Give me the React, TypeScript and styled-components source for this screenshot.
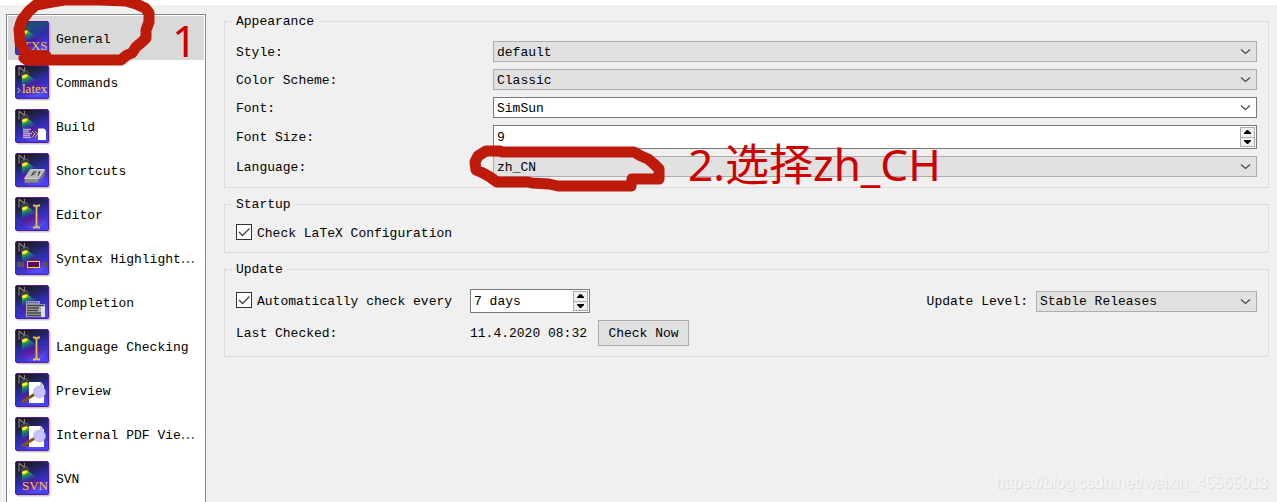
import React from 'react';
import styled, { createGlobalStyle } from 'styled-components';

const mono = `"Liberation Mono", "Noto Sans CJK SC", monospace`;

const GlobalStyle = createGlobalStyle`
  *, *::before, *::after { box-sizing: border-box; }
  body {
    margin: 0;
    background: #f0f0f0;
    color: #000;
    font: 13px/16px ${mono};
  }
  input, select, button { font: inherit; color: inherit; margin: 0; }
`;

const Window = styled.div`
  position: relative;
  display: flex;
  height: 100vh;
  padding: 5px 8px 0 6px;
  gap: 18px;
  background: linear-gradient(#fff 5px, #f0f0f0 5px);
  overflow: hidden;
`;

/* ---------- category list ---------- */

const Sidebar = styled.nav`
  flex: none;
  width: 200px;
  margin-top: 9px;
  padding: 1px;
  background: #fff;
  border: 1px solid #828790;
  border-bottom: 0;
  overflow: hidden;
`;

const Category = styled.a<{ $active?: boolean }>`
  display: flex;
  align-items: center;
  gap: 5px;
  height: 44px;
  padding: 2px 0 0 7px;
  background: ${(p) => (p.$active ? '#d9d9d9' : 'transparent')};
  color: #000;
  text-decoration: none;
  white-space: nowrap;
`;

const CategoryName = styled.span`
  padding-top: 2px;
`;

const IconSvg = styled.svg`
  flex: none;
  display: block;
  width: 36px;
  height: 36px;
`;

type Kind = 'txs' | 'latex' | 'build' | 'keys' | 'cursor' | 'syntax' | 'list' | 'preview' | 'svn';

const glyphs: Record<Kind, React.ReactNode> = {
  txs: (
    <text x="8" y="29" fontFamily="Liberation Serif, serif" fontSize="13" fill="#d8cc50">TXS</text>
  ),
  latex: (
    <>
      <path d="M2.5 23l2.500 2.500-2.500 2.500" stroke="#f0d838" fill="none" />
      <text x="7" y="28" fontFamily="Liberation Serif, serif" fontSize="13" fill="#f6d530">latex</text>
    </>
  ),
  build: (
    <>
      <path d="M8 20.500h8M8 22.500h6M8 24.500h9M8 26.500h7M8 28.500h8" stroke="#b9a9d8" strokeWidth="1.300" />
      <path d="M17 22l3 3-3 3M20 22l3 3-3 3" stroke="#e0b040" fill="none" />
      <path d="M23 19.500h6l2 2v9.500h-8z" fill="#fff" />
    </>
  ),
  keys: (
    <>
      <path d="M15 17h15.500l-1.500 6-7 7H9.500v-4z" fill="#777" />
      <path d="M15.500 16.500h14l-6 9H9.500z" fill="#b8b8b8" stroke="#ddd" strokeWidth=".8" />
      <path d="M10 26h13v3H10z" fill="#8c8c8c" />
      <path d="M16.500 23l2-4h3M17.500 21h2.500M23 19.500l2-.8-2 4" stroke="#333" strokeWidth="1" fill="none" />
    </>
  ),
  cursor: (
    <path
      d="M18 8.500h2l1.500 1.500L23 8.500h2M21.500 10v19M18 30.500h2l1.500-1.500 1.500 1.500h2"
      stroke="#edc52e" strokeWidth="1.800" fill="none"
    />
  ),
  syntax: (
    <>
      <rect x="2" y="21" width="7" height="5" fill="#555" />
      <rect x="28" y="21" width="4" height="5" fill="#555" />
      <rect x="12.500" y="20.500" width="12" height="6" fill="#5a0a52" stroke="#ffd92e" />
    </>
  ),
  list: (
    <>
      <rect x="11" y="16" width="14" height="3" fill="#9290c4" />
      <path d="M12 17.500h12" stroke="#4b4b80" strokeDasharray="1 1" />
      <rect x="11" y="19" width="19" height="13" fill="#aaa" />
      <rect x="26" y="21" width="4" height="11" fill="#dedcf0" />
      <path d="M12 20.500h17M12 23h12M12 25.500h11M12 28h14M12 30.500h14" stroke="#444" strokeWidth="1.500" />
    </>
  ),
  preview: (
    <>
      <path d="M14 9h12l3 4v17H14z" fill="#fff" />
      <path d="M25 9v4h4z" fill="#c0c0c0" />
      <path d="M7 29l13-8" stroke="#7a5a10" strokeWidth="3" />
      <circle cx="24.500" cy="19" r="6" fill="#c6c4fa" stroke="#a9a5e6" strokeWidth=".6" />
    </>
  ),
  svn: (
    <text x="7" y="29" fontFamily="Liberation Serif, serif" fontSize="13" fill="#f0cc30">SVN</text>
  ),
};

function CategoryIcon({ kind, id }: { kind: Kind; id: string }) {
  const teal = kind === 'txs';
  return (
    <IconSvg viewBox="0 0 36 36" aria-hidden="true">
      <defs>
        <linearGradient id={`bg-${id}`} x1=".35" y1="0" x2=".75" y2="1">
          <stop offset="0" stopColor={teal ? '#20485c' : '#1a1a20'} />
          <stop offset=".22" stopColor={teal ? '#1c4c80' : '#222250'} />
          <stop offset=".5" stopColor="#2c2cac" />
          <stop offset="1" stopColor="#4444ff" />
        </linearGradient>
        <linearGradient id={`beam-${id}`} gradientUnits="userSpaceOnUse" x1="9" y1="10" x2="18" y2="32">
          <stop offset="0" stopColor="#c8e020" />
          <stop offset=".14" stopColor="#38a040" />
          <stop offset=".28" stopColor="#187080" stopOpacity=".85" />
          <stop offset=".46" stopColor="#5018a0" stopOpacity=".75" />
          <stop offset=".68" stopColor="#781890" stopOpacity=".55" />
          <stop offset="1" stopColor="#6858ff" stopOpacity=".6" />
        </linearGradient>
      </defs>
      <rect x="1.500" y="1.500" width="34" height="34" rx="2" fill="#999" opacity=".55" />
      <rect x=".5" y=".5" width="33" height="33" rx="1.500" fill={`url(#bg-${id})`} stroke="#5c1a9c" />
      <path d="M7 11.500L12.500 9.500L31 23Q30 31 20 32Q9 32 7 27Z" fill={`url(#beam-${id})`} />
      <path d="M4 2v8.500M4.500 2.500l6 5M9.500 2v4" stroke="#808080" strokeWidth="1.200" fill="none" />
      <path d="M6.500 8l5.500-2.500 2 3-7 3z" fill="#3c3c3c" stroke="#666" strokeWidth=".6" />
      <ellipse cx="9.600" cy="11.300" rx="3" ry="1.700" fill="#f4f020" transform="rotate(-18 9.600 11.300)" />
      {glyphs[kind]}
    </IconSvg>
  );
}

const categories: { label: string; kind: Kind }[] = [
  { label: 'General', kind: 'txs' },
  { label: 'Commands', kind: 'latex' },
  { label: 'Build', kind: 'build' },
  { label: 'Shortcuts', kind: 'keys' },
  { label: 'Editor', kind: 'cursor' },
  { label: 'Syntax Highlight⋯', kind: 'syntax' },
  { label: 'Completion', kind: 'list' },
  { label: 'Language Checking', kind: 'cursor' },
  { label: 'Preview', kind: 'preview' },
  { label: 'Internal PDF Vie⋯', kind: 'preview' },
  { label: 'SVN', kind: 'svn' },
];

/* ---------- settings ---------- */

const Settings = styled.main`
  flex: 1;
  min-width: 0;
  display: flex;
  flex-direction: column;
  gap: 7px;
  margin-top: 7px;
`;

const Group = styled.fieldset`
  min-width: 0;
  margin: 0;
  padding: 11px 11px 10px;
  border: 1px solid #dcdcdc;
`;

const GroupTitle = styled.legend`
  margin-left: -4px;
  padding: 2px 4px 0;
`;

const Form = styled.div`
  display: grid;
  grid-template-columns: 257px 1fr;
  row-gap: 7px;
  align-items: center;
`;

const UpdateGrid = styled.div`
  display: grid;
  grid-template-columns: 226px 120px 91px 1fr;
  gap: 7px 8px;
  align-items: center;
`;

const LevelField = styled.div`
  grid-column: 3 / 5;
  display: flex;
  align-items: center;
  justify-content: flex-end;
  gap: 8px;
`;

const FieldLabel = styled.label`
  padding-top: 2px;
  white-space: nowrap;
`;

const FieldText = styled.span`
  padding-top: 2px;
  white-space: nowrap;
`;

const ComboBox = styled.span<{ $editable?: boolean; $width?: string }>`
  position: relative;
  display: block;
  width: ${(p) => p.$width ?? '100%'};
  height: 21px;
  background: ${(p) => (p.$editable ? '#fff' : '#e1e1e1')};
  border: 1px solid ${(p) => (p.$editable ? '#7a7a7a' : '#adadad')};
`;

const ComboSelect = styled.select`
  appearance: none;
  display: block;
  width: 100%;
  height: 100%;
  padding: 2px 20px 0 3px;
  border: 0;
  border-radius: 0;
  background: transparent;
  outline: none;
`;

const Chevron = styled.svg`
  position: absolute;
  right: 5px;
  top: 6px;
  width: 11px;
  height: 7px;
  pointer-events: none;
`;

function Combo({ id, value, editable, width }: { id: string; value: string; editable?: boolean; width?: string }) {
  return (
    <ComboBox $editable={editable} $width={width}>
      <ComboSelect id={id} defaultValue={value}>
        <option>{value}</option>
      </ComboSelect>
      <Chevron viewBox="0 0 11 7" aria-hidden="true">
        <path d="M1 1.500l4.500 4 4.500-4" fill="none" stroke="#444" strokeWidth="1.100" />
      </Chevron>
    </ComboBox>
  );
}

const SpinBox = styled.span`
  display: flex;
  width: 100%;
  height: 24px;
  padding: 1px;
  background: #fff;
  border: 1px solid #7a7a7a;
`;

const SpinInput = styled.input`
  flex: 1;
  min-width: 0;
  padding: 2px 2px 0;
  border: 0;
  background: transparent;
  outline: none;
`;

const SpinButtons = styled.span`
  display: flex;
  flex-direction: column;
  width: 15px;
  border: 1px solid #adadad;
`;

const SpinButton = styled.button`
  flex: 1;
  display: flex;
  align-items: center;
  justify-content: center;
  padding: 0;
  border: 0;
  background: #f0f0f0;
  & + & { border-top: 1px solid #adadad; }
`;

function Spin({ id, value, label }: { id: string; value: string; label?: string }) {
  return (
    <SpinBox>
      <SpinInput id={id} type="text" defaultValue={value} aria-label={label} />
      <SpinButtons>
        <SpinButton type="button" aria-label="Increase">
          <svg width="7" height="4" viewBox="0 0 7 4"><path d="M0 4V3L3 0h1l3 3v1z" /></svg>
        </SpinButton>
        <SpinButton type="button" aria-label="Decrease">
          <svg width="7" height="4" viewBox="0 0 7 4"><path d="M0 0v1l3 3h1l3-3V0z" /></svg>
        </SpinButton>
      </SpinButtons>
    </SpinBox>
  );
}

const CheckLabel = styled.label`
  position: relative;
  display: flex;
  gap: 5px;
  height: 18px;
  white-space: nowrap;
`;

const CheckInput = styled.input`
  appearance: none;
  flex: none;
  width: 16px;
  height: 16px;
  border: 1px solid #333;
  background: #fff;
`;

const CheckMark = styled.svg`
  position: absolute;
  left: 0;
  top: 0;
  width: 16px;
  height: 16px;
  pointer-events: none;
`;

function Check({ children }: { children: React.ReactNode }) {
  return (
    <CheckLabel>
      <CheckInput type="checkbox" defaultChecked />
      <CheckMark viewBox="0 0 16 16" aria-hidden="true">
        <path d="M3 8l3.500 3.500L13.500 4.500" fill="none" stroke="#444" strokeWidth="1.300" />
      </CheckMark>
      <FieldText>{children}</FieldText>
    </CheckLabel>
  );
}

const PushButton = styled.button`
  height: 26px;
  padding: 2px 0 0;
  border: 1px solid #adadad;
  background: #e1e1e1;
  white-space: nowrap;
`;

/* ---------- notes drawn over the window ---------- */

const Marker = styled.svg`
  position: absolute;
  top: 0;
  left: 0;
  width: 700px;
  height: 200px;
  pointer-events: none;
`;

const Note = styled.span`
  position: absolute;
  color: #d00000;
  font: 44px/60px "Noto Sans", "Noto Sans CJK SC", sans-serif;
  white-space: nowrap;
  pointer-events: none;
`;

const StepOne = styled(Note)`
  top: 10px;
  left: 172px;
`;

const StepTwo = styled(Note)`
  top: 134px;
  left: 688px;
`;

const Watermark = styled.span`
  position: absolute;
  right: 9px;
  bottom: 9px;
  color: #f6f6f6;
  font: 16px/20px "Liberation Sans", Arial, sans-serif;
  text-shadow: 1px 1px 1px #d8d8d8;
  pointer-events: none;
`;

export default function App() {
  return (
    <>
      <GlobalStyle />
      <Window>
        <Sidebar aria-label="Categories">
          {categories.map((c, i) => (
            <Category key={c.label} href="#" $active={i === 0}>
              <CategoryIcon kind={c.kind} id={String(i)} />
              <CategoryName>{c.label}</CategoryName>
            </Category>
          ))}
        </Sidebar>

        <Settings>
          <Group>
            <GroupTitle>Appearance</GroupTitle>
            <Form>
              <FieldLabel htmlFor="style">Style:</FieldLabel>
              <Combo id="style" value="default" />
              <FieldLabel htmlFor="scheme">Color Scheme:</FieldLabel>
              <Combo id="scheme" value="Classic" />
              <FieldLabel htmlFor="font">Font:</FieldLabel>
              <Combo id="font" value="SimSun" editable />
              <FieldLabel htmlFor="size">Font Size:</FieldLabel>
              <Spin id="size" value="9" />
              <FieldLabel htmlFor="language">Language:</FieldLabel>
              <Combo id="language" value="zh_CN" />
            </Form>
          </Group>

          <Group>
            <GroupTitle>Startup</GroupTitle>
            <Check>Check LaTeX Configuration</Check>
          </Group>

          <Group>
            <GroupTitle>Update</GroupTitle>
            <UpdateGrid>
              <Check>Automatically check every</Check>
              <Spin id="interval" value="7 days" label="Check interval" />
              <LevelField>
                <FieldLabel htmlFor="level">Update Level:</FieldLabel>
                <Combo id="level" value="Stable Releases" width="221px" />
              </LevelField>
              <FieldText>Last Checked:</FieldText>
              <FieldText>11.4.2020 08:32</FieldText>
              <PushButton type="button">Check Now</PushButton>
            </UpdateGrid>
          </Group>
        </Settings>

        <Marker viewBox="0 0 700 200" aria-hidden="true">
          <g fill="none" stroke="#be1a0a" strokeWidth="11" strokeLinecap="round" strokeLinejoin="round">
            <path d="M46 56L25 55L24 50L20 42L19 29L22 20L29 11L36 5L52 2L64 0L100 0L126 1L136 4L145 8L149 13L149 22L146 30L146 38L142 42L136 47L132 53L127 55L121 60L60 60L27 60L24 58" />
            <path d="M502 152L634 152L641 156L648 159L654 164L659 169L659 179L632 179L631 186L558 186L549 184L532 183L528 182L497 182L490 177L483 173L476 170L475 162L478 156L486 151L500 151" />
          </g>
        </Marker>
        <StepOne>1</StepOne>
        <StepTwo>2.选择zh_CH</StepTwo>
        <Watermark>https://blog.csdn.net/weixin_45565013</Watermark>
      </Window>
    </>
  );
}
